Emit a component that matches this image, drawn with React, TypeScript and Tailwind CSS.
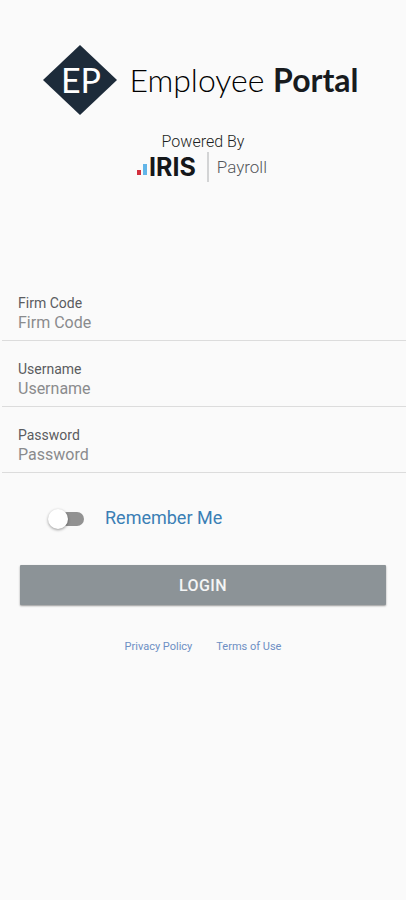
import { useState } from 'react';

type FieldProps = { id: string; label: string; type?: string };

function Field({ id, label, type = 'text' }: FieldProps) {
  return (
    <div className="flex h-[66px] flex-col justify-end border-b border-[#dcdcdc] px-4 pb-[7px]">
      <label htmlFor={id} className="text-sm leading-5 text-[#5a5c60]">
        {label}
      </label>
      <input
        id={id}
        type={type}
        placeholder={label}
        className="h-5 w-full bg-transparent text-base leading-5 text-[#444] outline-none placeholder:text-[#8a8b8d]"
      />
    </div>
  );
}

function Diamond() {
  return (
    <svg viewBox="0 0 74 70" className="h-[70px] w-[74px] shrink-0" role="img" aria-label="EP">
      <path d="M37 0 74 35 37 70 0 35Z" fill="#1d2b3a" />
      <text x="38" y="48" textAnchor="middle" fontSize="34" fill="#fff" fontFamily="Lato, sans-serif">
        EP
      </text>
    </svg>
  );
}

export default function App() {
  const [remember, setRemember] = useState(false);

  return (
    <main className="min-h-screen bg-[#fafafa] pt-[45px] font-[Roboto,sans-serif]">
      <header className="flex flex-col items-center">
        <div className="flex items-center gap-3 pr-1">
          <Diamond />
          <h1 className="font-[Lato,sans-serif] text-[32px] leading-10 font-light whitespace-nowrap text-black">
            Employee <span className="font-bold text-[#181b1e]">Portal</span>
          </h1>
        </div>
        <p className="mt-[17px] text-base leading-5 font-light text-[#1c1e21]">Powered By</p>
        <div className="flex h-[30px] items-center pr-0.5">
          <svg viewBox="0 0 12 18" className="h-[18px] w-3" aria-hidden="true">
            <rect x="0" y="12" width="4" height="5" fill="#d22f3c" />
            <rect x="6" y="6" width="4" height="11" fill="#62b5e8" />
          </svg>
          <span className="font-[Inter,sans-serif] text-[25px] leading-[30px] font-bold text-[#15171a]">IRIS</span>
          <span className="ml-[11px] h-[30px] w-0.5 bg-[#d3d4d5]" />
          <span className="ml-2 text-[17px] leading-5 font-light text-[#55575a]">Payroll</span>
        </div>
      </header>

      <form onSubmit={(e) => e.preventDefault()}>
        <div className="mt-[93px] ml-0.5">
          <Field id="firm" label="Firm Code" />
          <Field id="username" label="Username" />
          <Field id="password" label="Password" type="password" />
        </div>

        <label className="mt-8 ml-12 flex w-fit items-center">
          <input
            type="checkbox"
            role="switch"
            checked={remember}
            onChange={(e) => setRemember(e.target.checked)}
            className="peer sr-only"
          />
          <span className="flex h-7 w-9 items-center peer-checked:flex-row-reverse" aria-hidden="true">
            <span className="z-10 size-5 rounded-full bg-white shadow-[0_1px_3px_rgba(0,0,0,0.4)]" />
            <span className="-mx-2 h-[14px] w-6 rounded-full bg-[#929292]" />
          </span>
          <span className="ml-[21px] pb-0.5 text-lg leading-6 text-[#3a7fb5]">Remember Me</span>
        </label>

        <div className="mt-8 px-5">
          <button
            type="submit"
            className="h-10 w-full rounded-[1px] bg-[#8c9397] pt-0.5 text-base font-medium tracking-wide text-[#f4f5f5] shadow-[0_1px_2px_rgba(0,0,0,0.4)]"
          >
            LOGIN
          </button>
        </div>
      </form>

      <nav className="mt-8 flex justify-center gap-6 text-[11px] leading-5 text-[#6d8fc4]">
        <a href="#privacy">Privacy Policy</a>
        <a href="#terms">Terms of Use</a>
      </nav>
    </main>
  );
}
